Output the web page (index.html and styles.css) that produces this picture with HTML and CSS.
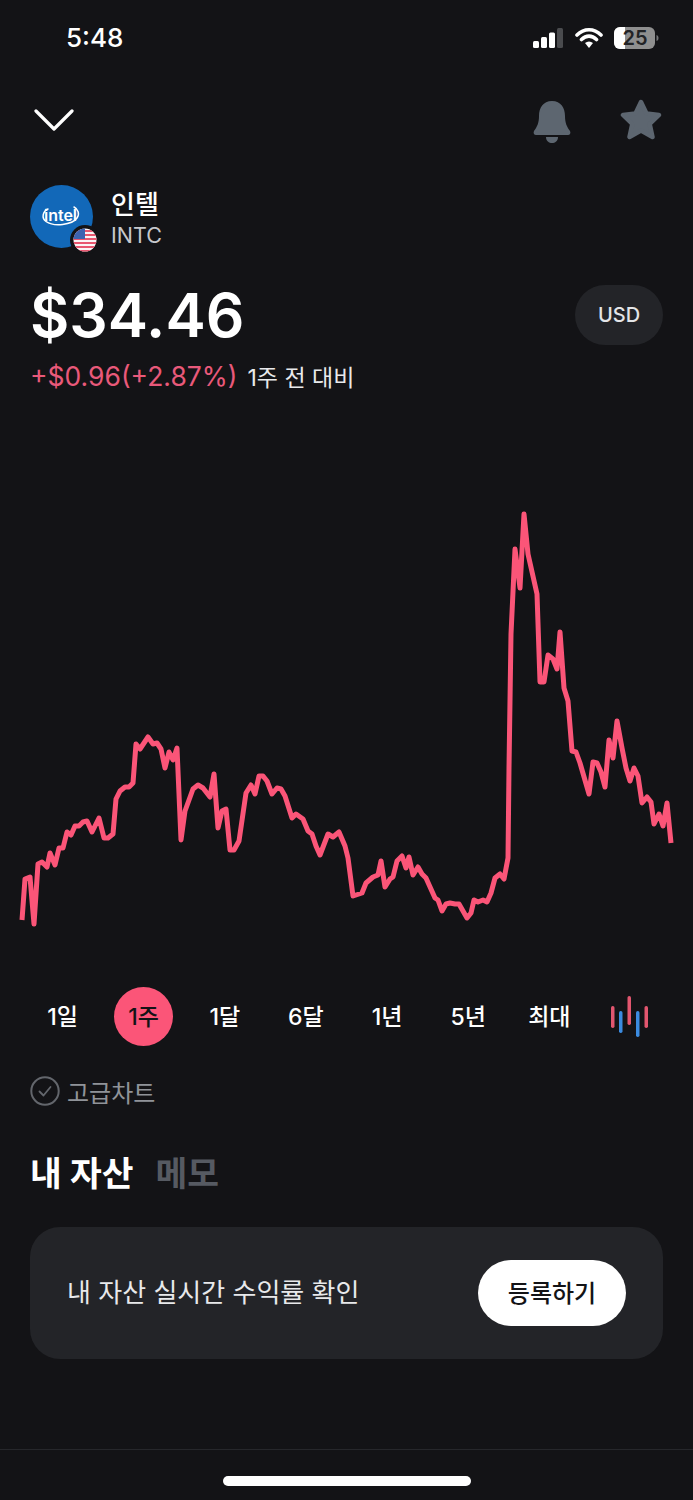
FILE: index.html
```html
<!DOCTYPE html>
<html lang="ko">
<head>
    <meta charset="UTF-8">
    <meta name="viewport" content="width=device-width, initial-scale=1.0">
    <title>인텔</title>
    <link rel="stylesheet" href="styles.css">
</head>
<body>

<div id="status-bar">
    <div class="clock">5:48</div>
    <div class="status-icons">
        <svg width="32" height="22" viewBox="0 0 32 22">
            <rect x="1" y="14" width="6" height="7" rx="1.5" fill="#fff"/>
            <rect x="9" y="10" width="6" height="11" rx="1.5" fill="#fff"/>
            <rect x="17" y="5.500" width="6" height="15.500" rx="1.500" fill="#fff"/>
            <rect x="25" y="1" width="6" height="20" rx="1.500" fill="#4a4b4e"/>
        </svg>
        <svg width="28" height="22" viewBox="0 0 28 22">
            <path d="M2 8 C9 1 19 1 26 8 M6.500 12.500 C11 8 17 8 21.500 12.500" fill="none" stroke="#fff" stroke-width="3.600" stroke-linecap="round"/>
            <path d="M10 16 C12.500 14 15.500 14 18 16 L14 21 Z" fill="#fff"/>
        </svg>
        <svg class="battery" width="45" height="22" viewBox="0 0 45 22">
            <rect x="0" y="0" width="41" height="22" rx="6" fill="#8f8f8f"/>
            <path d="M6 0 H11 V22 H6 A6 6 0 0 1 0 16 V6 A6 6 0 0 1 6 0 Z" fill="#fff"/>
            <path d="M42.500 8 C44 8.500 44.500 9.500 44.500 11 C44.500 12.500 44 13.500 42.500 14 Z" fill="#77787a"/>
            <text class="battery-text" x="21" y="18" text-anchor="middle">25</text>
        </svg>
    </div>
</div>

<div id="nav">
    <svg width="40" height="24" viewBox="0 0 40 24">
        <path d="M2 3 L20 21 L38 3" fill="none" stroke="#fff" stroke-width="3.200" stroke-linecap="round" stroke-linejoin="round"/>
    </svg>
    <div class="nav-actions">
        <svg class="bell" width="38" height="43" viewBox="0 0 38 43">
            <path d="M19 1 C28 1 32 8 32 16 C32 23 34 27 37 31 C38 33 37 35 35 35 H3 C1 35 0 33 1 31 C4 27 6 23 6 16 C6 8 10 1 19 1 Z" fill="#5d6670"/>
            <path d="M13 37 H25 C25 41 22 43 19 43 C16 43 13 41 13 37 Z" fill="#5d6670"/>
        </svg>
        <svg width="42" height="42" viewBox="0 0 42 42">
            <path d="M21 3 L26.500 14.500 L39 16 L29.700 25 L32.500 38 L21 31.500 L9.500 38 L12.300 25 L3 16 L15.500 14.500 Z" fill="#5d6670" stroke="#5d6670" stroke-width="4.500" stroke-linejoin="round"/>
        </svg>
    </div>
</div>

<div id="stock-head">
    <div class="logo">
        <svg width="63" height="63" viewBox="0 0 63 63">
            <circle cx="31.500" cy="31.500" r="31.500" fill="#1268b8"/>
            <text class="logo-text" x="30.500" y="36" text-anchor="middle">intel</text>
            <path d="M18 24 C13 26 11 33 16 36.500 C24 42 42 40 47 33 C50 29 48 24 44 22" fill="none" stroke="#fff" stroke-width="1.500" stroke-linecap="round"/>
        </svg>
        <svg class="flag" width="30" height="30" viewBox="0 0 30 30">
            <defs>
                <clipPath id="flag-clip"><circle cx="15" cy="15" r="11.500"/></clipPath>
            </defs>
            <circle cx="15" cy="15" r="15" fill="#131316"/>
            <g clip-path="url(#flag-clip)">
                <rect x="0" y="0" width="30" height="30" fill="#fbf3f4"/>
                <rect x="0" y="5" width="30" height="2" fill="#e8566f"/>
                <rect x="0" y="9" width="30" height="2" fill="#e8566f"/>
                <rect x="0" y="13" width="30" height="2" fill="#e8566f"/>
                <rect x="0" y="17" width="30" height="2" fill="#e8566f"/>
                <rect x="0" y="21" width="30" height="2" fill="#e8566f"/>
                <rect x="0" y="25" width="30" height="2" fill="#e8566f"/>
                <rect x="0" y="2" width="15" height="12" fill="#3d63b0"/>
            </g>
        </svg>
    </div>
    <div class="names">
        <div class="name">인텔</div>
        <div class="ticker">INTC</div>
    </div>
</div>

<div id="price-row">
    <div class="price">$34.46</div>
    <div class="currency">USD</div>
</div>
<div id="change">
    <span class="change-value">+$0.96(+2.87%)</span>
    <span class="change-label">1주 전 대비</span>
</div>

<svg id="chart" width="693" height="560" viewBox="0 400 693 560">
    <polyline fill="none" stroke="#fb5578" stroke-width="5" stroke-linejoin="round" stroke-linecap="butt" points="22,919 25,878 30,876 34,923 38,863 42,861 47,866 50,852 55,864 59,847 63,847 67,831 71,834 75,825 79,825 83,821 87,820 92,831 99,817 104,837 108,837 113,833 116,798 120,790 125,786 129,786 133,782 136,743 140,748 148,736 153,743 157,742 161,748 165,767 169,751 173,759 177,747 181,839 185,810 193,788 198,784 203,787 210,796 214,773 218,827 222,810 226,808 230,849 234,849 239,840 246,792 251,784 255,793 259,775 263,775 267,780 272,793 277,787 281,788 285,795 292,817 296,813 303,818 308,830 312,833 316,845 320,854 328,833 333,836 339,831 345,845 348,857 353,895 362,892 366,882 373,876 378,874 381,860 385,886 390,878 393,876 397,860 402,855 406,867 409,856 413,874 418,866 422,873 426,877 435,897 438,899 442,910 446,903 450,902 455,903 459,903 467,917 471,912 474,899 478,901 483,899 487,901 491,892 495,877 500,873 504,878 508,857 509,767 511,633 515,548 520,587 524,513 528,553 537,593 540,681 544,681 548,654 553,658 557,668 560,631 564,687 568,700 572,750 576,751 580,762 589,793 593,761 597,762 601,771 605,786 609,739 613,757 617,720 622,747 626,767 630,780 634,767 638,775 642,802 647,796 651,801 654,823 659,813 663,825 667,802 671,842"/>
</svg>

<div id="ranges">
    <div class="range">1일</div>
    <div class="range active">1주</div>
    <div class="range">1달</div>
    <div class="range">6달</div>
    <div class="range">1년</div>
    <div class="range">5년</div>
    <div class="range">최대</div>
    <div class="range candle">
        <svg width="40" height="42" viewBox="0 0 40 42">
            <rect x="1" y="11" width="3.500" height="22" rx="1.700" fill="#e2566f"/>
            <rect x="9" y="16" width="3.500" height="22" rx="1.700" fill="#3b8be0"/>
            <rect x="17.500" y="1" width="3.500" height="29" rx="1.700" fill="#e2566f"/>
            <rect x="26" y="16" width="3.500" height="26" rx="1.700" fill="#3b8be0"/>
            <rect x="34.500" y="11" width="3.500" height="22" rx="1.700" fill="#e2566f"/>
        </svg>
    </div>
</div>

<div id="advanced">
    <svg width="30" height="30" viewBox="0 0 30 30">
        <circle cx="15" cy="15" r="13.700" fill="none" stroke="#63666c" stroke-width="2"/>
        <path d="M9.500 15.500 L13.500 19.500 L20.500 11" fill="none" stroke="#63666c" stroke-width="1.800" stroke-linecap="round" stroke-linejoin="round"/>
    </svg>
    <span>고급차트</span>
</div>

<div id="section-tabs">
    <div class="section-tab active">내 자산</div>
    <div class="section-tab">메모</div>
</div>

<div id="asset-card">
    <div class="asset-text">내 자산 실시간 수익률 확인</div>
    <button class="register">등록하기</button>
</div>

<div id="home-area">
    <div class="home-bar"></div>
</div>

</body>
</html>
```

FILE: styles.css
```css
body {
    font-family: 'Inter', 'Noto Sans CJK KR', sans-serif;
    margin: 0;
    width: 693px;
    height: 1500px;
    overflow: hidden;
    display: flex;
    flex-direction: column;
    background-color: #131316;
    color: white;
}
svg {
    display: block;
}
#status-bar {
    height: 75px;
    display: flex;
    justify-content: space-between;
    align-items: center;
    padding: 0 34px 0 66px;
}
.clock {
    font-size: 26px;
    font-weight: 500;
}
.status-icons {
    display: flex;
    align-items: center;
    gap: 11px;
}
.battery-text {
    font-size: 20px;
    font-weight: 600;
    fill: #222326;
}
#nav {
    height: 90px;
    display: flex;
    justify-content: space-between;
    align-items: center;
    padding: 0 31px 0 34px;
}
.nav-actions {
    display: flex;
    align-items: center;
    gap: 49px;
}
.bell {
    margin-top: 2px;
}
#stock-head {
    display: flex;
    align-items: flex-start;
    gap: 18px;
    height: 63px;
    margin: 20px 0 0 30px;
}
.logo {
    position: relative;
    width: 63px;
    height: 63px;
}
.logo-text {
    font-size: 16px;
    font-weight: 600;
    fill: white;
}
.flag {
    position: absolute;
    right: -7px;
    bottom: -7px;
}
.names {
    margin-top: 3px;
}
.name {
    font-size: 26px;
    font-weight: 500;
    line-height: 33px;
}
.ticker {
    font-size: 21.500px;
    line-height: 28px;
    color: #c6c8cc;
}
#price-row {
    display: flex;
    justify-content: space-between;
    align-items: center;
    margin-top: 37px;
    padding: 0 30px;
}
.price {
    font-size: 60.500px;
    font-weight: 600;
    line-height: 60px;
}
.currency {
    width: 88px;
    height: 60px;
    border-radius: 30px;
    background: #232428;
    display: flex;
    align-items: center;
    justify-content: center;
    font-size: 20px;
    font-weight: 500;
    color: #e4e5e7;
}
#change {
    margin: 16px 0 0 30px;
    display: flex;
    align-items: center;
    gap: 10px;
    height: 30px;
}
.change-value {
    font-size: 26.500px;
    color: #e9597a;
}
.change-label {
    font-size: 23px;
    color: #e8e9eb;
}
#chart {
    flex-shrink: 0;
    margin-top: 10px;
}
#ranges {
    display: grid;
    grid-template-columns: repeat(8, 1fr);
    padding: 0 22px;
    margin-top: 26px;
    height: 60px;
}
.range {
    display: flex;
    align-items: center;
    justify-content: center;
    padding-bottom: 4px;
    box-sizing: border-box;
    font-size: 23px;
    font-weight: 500;
}
.range.candle {
    padding-bottom: 2px;
}
.range.active {
    width: 59px;
    height: 59px;
    border-radius: 50%;
    background: #fb5578;
    color: #131316;
    justify-self: center;
}
#advanced {
    display: flex;
    align-items: center;
    gap: 7px;
    margin: 29px 0 0 30px;
    height: 30px;
    font-size: 24px;
    color: #909399;
}
#section-tabs {
    display: flex;
    align-items: center;
    gap: 22px;
    margin: 40px 0 0 30px;
    height: 50px;
}
.section-tab {
    font-size: 34.500px;
    font-weight: 700;
    color: #565a62;
}
.section-tab.active {
    color: white;
}
#asset-card {
    margin: 31px 30px 0;
    height: 132px;
    border-radius: 30px;
    background: #232428;
    display: flex;
    justify-content: space-between;
    align-items: center;
    padding: 0 37px;
}
.asset-text {
    font-size: 26px;
    color: #e8e9eb;
    padding-bottom: 5px;
}
.register {
    width: 148px;
    height: 66px;
    border: none;
    border-radius: 33px;
    padding: 0 0 4px;
    background: white;
    color: #131316;
    font-family: inherit;
    font-size: 24px;
    font-weight: 500;
}
#home-area {
    margin-top: 90px;
    flex: 1;
    border-top: 1px solid #26272b;
    display: flex;
    justify-content: center;
}
.home-bar {
    width: 248px;
    height: 10px;
    margin-top: 26px;
    border-radius: 5px;
    background: white;
}
```
